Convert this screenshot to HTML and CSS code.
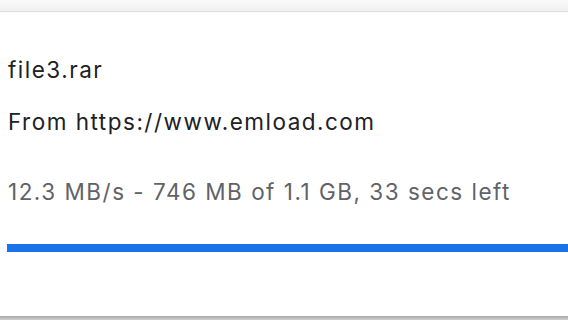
FILE: index.html
```html
<!DOCTYPE html>
<html>
<head>
<meta charset="utf-8">
<link rel="stylesheet" href="styles.css">
</head>
<body>
<div class="page">
  <div class="topbar"></div>
  <div class="item">
    <div class="name">file3.rar</div>
    <div class="from">From https://www.emload.com</div>
    <div class="status">12.3 MB/s - 746 MB of 1.1 GB, 33 secs left</div>
    <div class="progress"><div class="fill"></div></div>
  </div>
  <div class="bottom"></div>
</div>
</body>
</html>
```

FILE: styles.css
```css
html, body {
  margin: 0;
  padding: 0;
  background: #ffffff;
}
.page {
  width: 568px;
  height: 320px;
  display: flex;
  flex-direction: column;
  overflow: hidden;
  font-family: Inter, "Liberation Sans", Arial, sans-serif;
}
.topbar {
  height: 11px;
  background: linear-gradient(#f9f9f9, #f1f1f1);
  border-bottom: 1px solid #dcdcdc;
  flex: none;
}
.item {
  flex: 1;
  padding: 44px 0 0 8px;
  display: flex;
  flex-direction: column;
}
.name,
.from,
.status {
  font-size: 22.5px;
  line-height: 28px;
  letter-spacing: 1.5px;
  white-space: nowrap;
}
.name {
  color: #202124;
}
.from {
  margin-top: 24px;
  color: #202124;
}
.status {
  margin-top: 42px;
  color: #5f6368;
}
.progress {
  margin-top: 38px;
  margin-left: -1px;
  height: 8px;
  background: #1a73e8;
}
.fill {
  height: 100%;
}
.bottom {
  height: 4px;
  flex: none;
  background: linear-gradient(#a8a8a8, #d0d0d0);
}
```
